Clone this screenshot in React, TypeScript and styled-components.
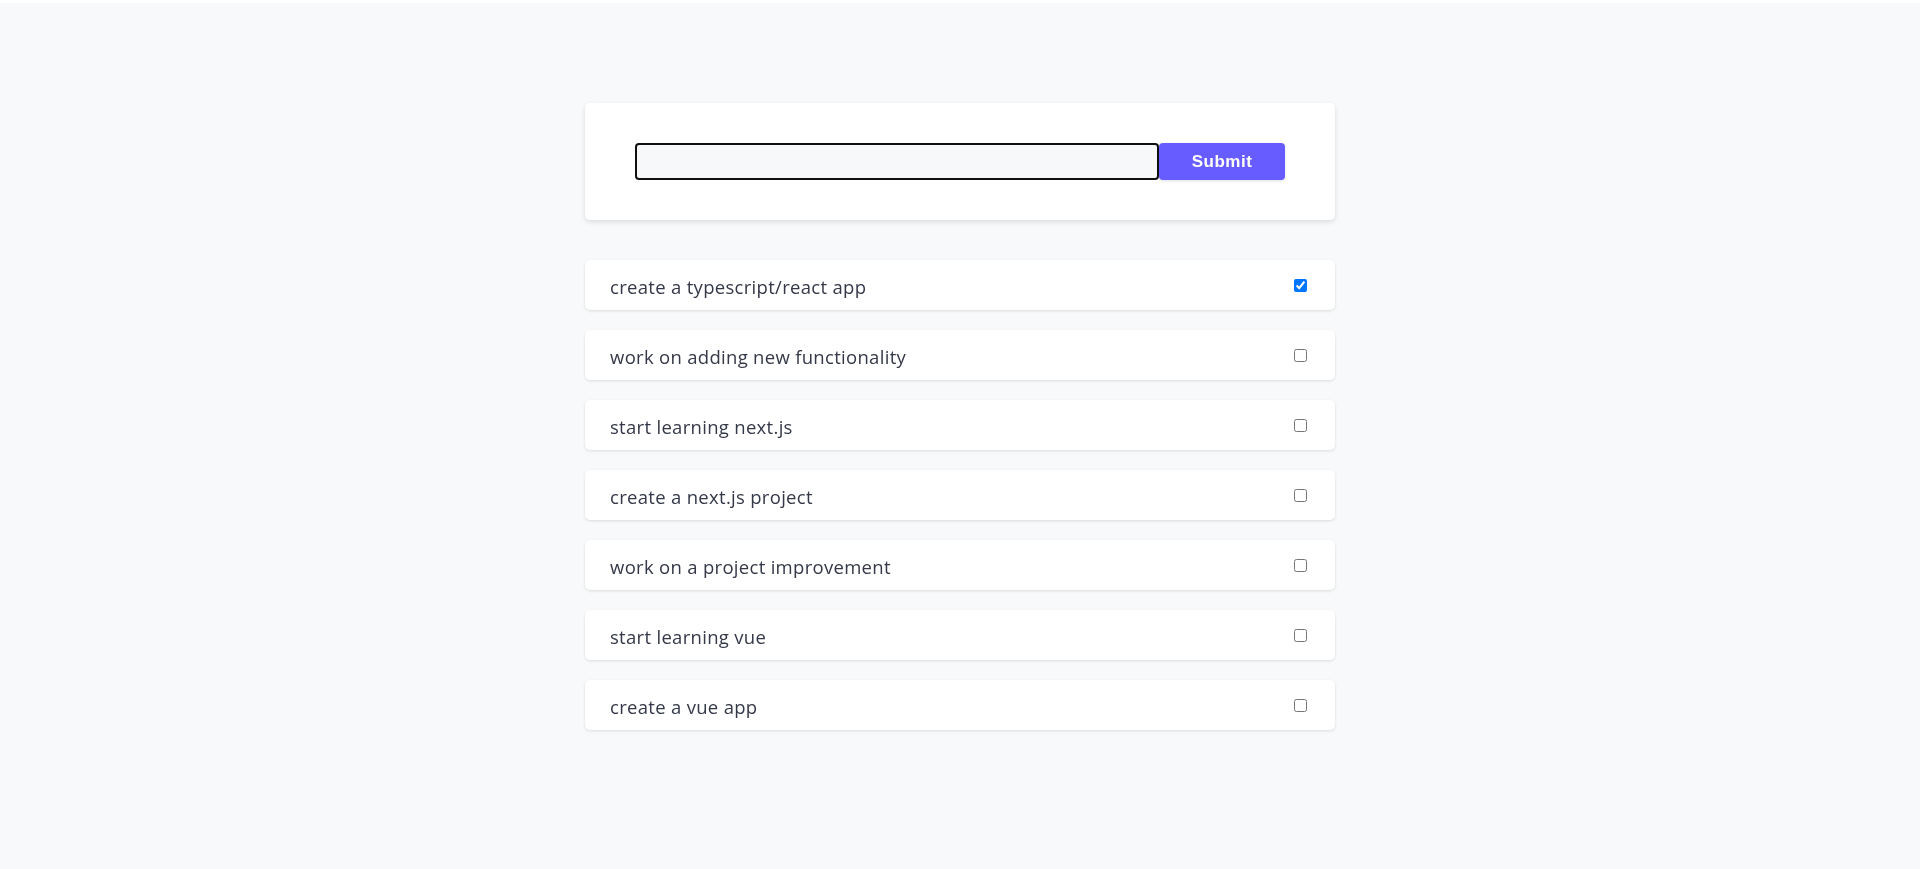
import React, { useState } from "react";
import styled, { createGlobalStyle } from "styled-components";

const GlobalStyle = createGlobalStyle`
  html, body {
    margin: 0;
    padding: 0;
    background: #ffffff;
  }
  body {
    font-family: "Open Sans", "Noto Sans", sans-serif;
  }
  * { box-sizing: border-box; }
`;

const Page = styled.div`
  margin-top: 3px;
  min-height: 866px;
  background: #f8f9fb;
  display: flex;
  flex-direction: column;
  align-items: center;
  padding-top: 100px;
`;

const Column = styled.div`
  width: 750px;
  display: flex;
  flex-direction: column;
  gap: 40px;
`;

const FormCard = styled.form`
  background: #ffffff;
  border-radius: 5px;
  box-shadow: 0 2px 5px rgba(0, 0, 0, 0.12);
  padding: 40px 50px;
  display: flex;
  align-items: center;
`;

const TextInput = styled.input`
  flex: 1;
  height: 37px;
  border: 2px solid #101010;
  border-radius: 4px;
  background: #f7f8fa;
  padding: 0 12px;
  font-family: "Open Sans", sans-serif;
  font-size: 16px;
  color: #2c3040;
  caret-color: #2c3040;
  outline: none;
  margin: 0;
`;

const SubmitButton = styled.button`
  width: 126px;
  height: 37px;
  border: none;
  border-radius: 4px;
  background: #675cff;
  color: #ffffff;
  font-family: "Liberation Sans", Arial, sans-serif;
  font-size: 17px;
  font-weight: 700;
  letter-spacing: 0.5px;
  box-shadow: 0 1px 3px rgba(0, 0, 0, 0.12);
  cursor: pointer;
  margin: 0;
`;

const List = styled.ul`
  list-style: none;
  margin: 0;
  padding: 0;
  display: flex;
  flex-direction: column;
  gap: 20px;
`;

const Item = styled.li`
  height: 50px;
  background: #ffffff;
  border-radius: 5px;
  box-shadow: 0 1px 3px rgba(0, 0, 0, 0.12);
  padding: 0 25px;
  display: flex;
  align-items: center;
  justify-content: space-between;
`;

const ItemText = styled.span`
  font-family: "Open Sans", "Noto Sans", sans-serif;
  font-size: 18.5px;
  letter-spacing: 0.3px;
  color: #343848;
  padding-top: 2px;
`;

const Check = styled.input`
  width: 13px;
  height: 13px;
  margin: 3px 3px 3px 4px;
  accent-color: #0075ff;
`;

const initial = [
  { text: "create a typescript/react app", done: true },
  { text: "work on adding new functionality", done: false },
  { text: "start learning next.js", done: false },
  { text: "create a next.js project", done: false },
  { text: "work on a project improvement", done: false },
  { text: "start learning vue", done: false },
  { text: "create a vue app", done: false },
];

export default function App() {
  const [todos, setTodos] = useState(initial);
  const [value, setValue] = useState("");

  return (
    <>
      <GlobalStyle />
      <Page>
        <Column>
          <FormCard onSubmit={(e) => e.preventDefault()}>
            <TextInput
              autoFocus
              value={value}
              onChange={(e) => setValue(e.target.value)}
            />
            <SubmitButton type="submit">Submit</SubmitButton>
          </FormCard>
          <List>
            {todos.map((t, i) => (
              <Item key={i}>
                <ItemText>{t.text}</ItemText>
                <Check
                  type="checkbox"
                  checked={t.done}
                  onChange={() =>
                    setTodos(
                      todos.map((x, j) => (j === i ? { ...x, done: !x.done } : x))
                    )
                  }
                />
              </Item>
            ))}
          </List>
        </Column>
      </Page>
    </>
  );
}
